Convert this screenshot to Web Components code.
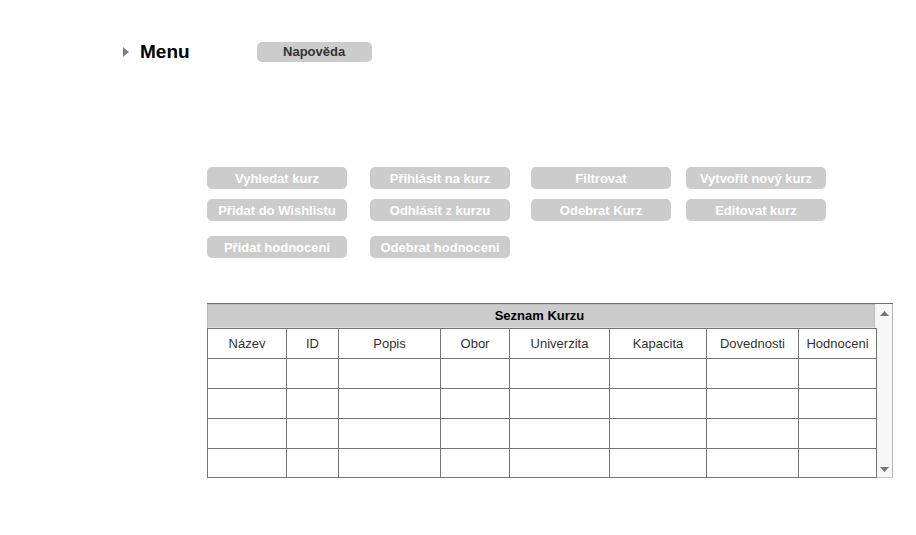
<!DOCTYPE html>
<html lang="cs">
<head>
<meta charset="utf-8">
<title>Seznam Kurzu</title>
<style>
body { margin: 0; background: #fff; color: #333; font: 13px/16px "Liberation Sans", Arial, sans-serif; }
</style>
</head>
<body>
<course-page></course-page>
<script>
const define = (name, html) => customElements.define(name, class extends HTMLElement {
  constructor() {
    super();
    this.attachShadow({ mode: 'open' }).innerHTML = html;
  }
});

define('menu-toggle', `
<style>
:host { display: block; }
button { display: flex; align-items: center; gap: 11px; margin: 0; padding: 0; border: 0; background: none; color: #000; font: bold 19px/22px "Liberation Sans", Arial, sans-serif; }
svg { display: block; }
</style>
<button type="button" aria-haspopup="menu">
  <svg width="6" height="10" viewBox="0 0 6 10" aria-hidden="true"><path d="M0 0L6 5L0 10Z" fill="#808080"/></svg>
  <slot></slot>
</button>`);

define('action-button', `
<style>
:host { display: block; width: 140px; --ink: #fff; --height: 22px; --top: 2px; }
:host([kind="help"]) { width: 115px; --ink: #333; --height: 20px; --top: 0; }
button { display: block; box-sizing: border-box; width: 100%; height: var(--height); margin: 0; padding: var(--top) 0 0; border: 0; border-radius: 5px; background: #ccc; color: var(--ink); font: bold 13px/20px "Liberation Sans", Arial, sans-serif; text-align: center; white-space: nowrap; }
</style>
<button type="button"><slot></slot></button>`);

define('top-bar', `
<style>
:host { display: flex; align-items: center; gap: 67px; padding: 41px 24px 0 123px; }
</style>
<slot></slot>`);

define('action-grid', `
<style>
:host { display: grid; grid-template-columns: 163fr 161fr 155fr 207fr; row-gap: 10px; }
:host([spaced]) { margin-top: 15px; }
</style>
<slot></slot>`);

define('scroll-rail', `
<style>
:host { display: flex; flex-direction: column; justify-content: space-between; flex: none; width: 16px; box-sizing: border-box; border-right: 1px solid #b5b5b5; border-bottom: 1px solid #ccc; background: #f7f7f7; padding: 7px 0 5px 1px; }
button { display: flex; justify-content: center; width: 13px; margin: 0; padding: 0; border: 0; background: none; }
svg { display: block; }
</style>
<button type="button" aria-label="Nahoru"><svg width="9" height="5" viewBox="0 0 9 5"><path d="M4.5 0L9 5H0Z" fill="#757575"/></svg></button>
<button type="button" aria-label="Dolů"><svg width="9" height="5" viewBox="0 0 9 5"><path d="M0 0H9L4.5 5Z" fill="#757575"/></svg></button>`);

const columns = [['Název', 79], ['ID', 52], ['Popis', 102], ['Obor', 69], ['Univerzita', 100], ['Kapacita', 97], ['Dovednosti', 92], ['Hodnoceni', 79]];

define('course-table', `
<style>
:host { display: flex; border-top: 1px solid #707070; background: #f7f7f7; }
section { flex: 1; min-width: 0; }
h2 { margin: 0 2px 0 0; padding-right: 3px; box-sizing: border-box; height: 24px; border: solid #bbb; border-width: 1px 1px 0; border-bottom: 1px solid #ddd; background: #ccc; color: #000; font: bold 13px/21px "Liberation Sans", Arial, sans-serif; text-align: center; }
table { table-layout: fixed; width: 100%; border-collapse: separate; border-spacing: 0; border: solid #757575; border-width: 1px 0 0; background: #fff; }
th, td { box-sizing: border-box; height: 30px; padding: 0; border: solid #757575; border-width: 0 0 1px 1px; font-weight: normal; text-align: center; white-space: nowrap; }
th:last-child, td:last-child { border-right-width: 1px; }
tr:last-child td { height: 29px; }
</style>
<section>
  <h2 id="title"><slot></slot></h2>
  <table aria-labelledby="title">
    <colgroup>${columns.map(([, w]) => `<col style="width:${w}px">`).join('')}</colgroup>
    <thead><tr>${columns.map(([t]) => `<th scope="col">${t}</th>`).join('')}</tr></thead>
    <tbody>${`<tr>${'<td></td>'.repeat(columns.length)}</tr>`.repeat(4)}</tbody>
  </table>
</section>
<scroll-rail></scroll-rail>`);

define('course-page', `
<style>
:host { display: block; }
main { padding: 104px 23px 24px 207px; }
course-table { margin-top: 45px; }
</style>
<top-bar>
  <menu-toggle>Menu</menu-toggle>
  <action-button kind="help">Napověda</action-button>
</top-bar>
<main>
  <action-grid>
    <action-button>Vyhledat kurz</action-button>
    <action-button>Přihlásit na kurz</action-button>
    <action-button>Filtrovat</action-button>
    <action-button>Vytvořit nový kurz</action-button>
    <action-button>Přidat do Wishlistu</action-button>
    <action-button>Odhlásit z kurzu</action-button>
    <action-button>Odebrat Kurz</action-button>
    <action-button>Editovat kurz</action-button>
  </action-grid>
  <action-grid spaced>
    <action-button>Přidat hodnoceni</action-button>
    <action-button>Odebrat hodnoceni</action-button>
  </action-grid>
  <course-table>Seznam Kurzu</course-table>
</main>`);
</script>
</body>
</html>
